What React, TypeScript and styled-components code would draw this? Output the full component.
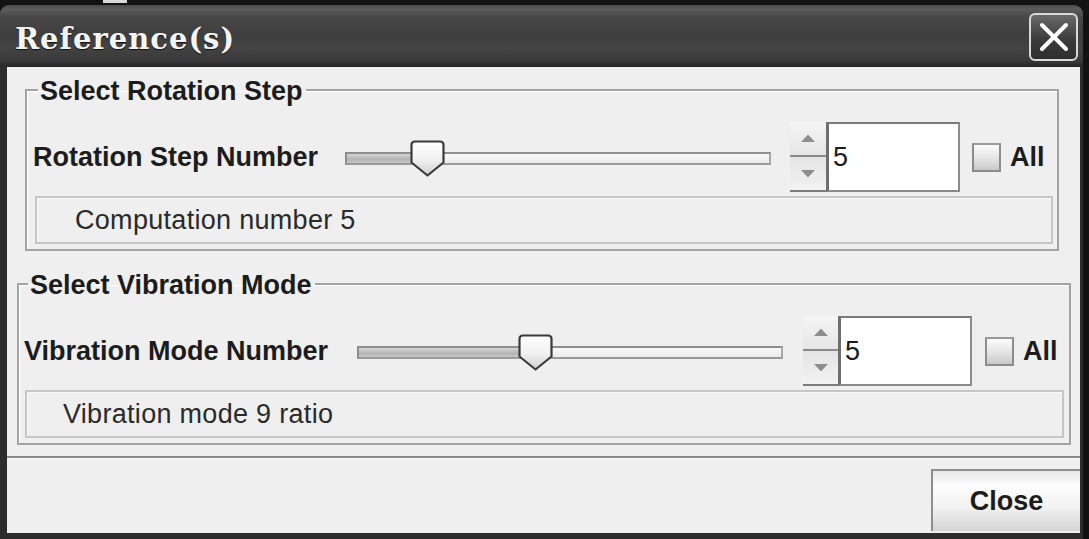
import React, { useId } from "react";
import styled, { createGlobalStyle } from "styled-components";

const Global = createGlobalStyle`
  html, body { margin: 0; padding: 0; background: #121212; }
  body { width: 1089px; height: 539px; overflow: hidden; }
  * { box-sizing: border-box; }
`;

const Screen = styled.div`
  width: 1089px;
  height: 539px;
  background: #121212;
  display: flex;
  flex-direction: column;
`;

const TopStrip = styled.div`
  height: 5px;
  display: flex;
`;

const Patch = styled.div`
  margin-left: 103px;
  width: 24px;
  height: 3px;
  background: #d8d8d8;
`;

const Window = styled.div`
  width: 1083px;
  flex: 1;
  display: flex;
  flex-direction: column;
  background: #2c2c2c;
  border-radius: 9px 9px 0 0;
  overflow: hidden;
`;

const TitleBar = styled.div`
  height: 62px;
  flex: none;
  display: flex;
  align-items: center;
  justify-content: space-between;
  padding: 0 5px 0 15px;
  background: linear-gradient(
    to bottom,
    #4a4a4a 0px,
    #5c5c5c 4px,
    #484848 12px,
    #3e3e3e 30px,
    #444444 42px,
    #393939 56px,
    #262626 62px
  );
`;

const Title = styled.div`
  font-family: "DejaVu Serif", "Liberation Serif", serif;
  font-weight: 700;
  font-size: 29px;
  letter-spacing: 1px;
  color: #f4f4f4;
  text-shadow: 0 1px 1px #111;
  margin-top: 5px;
`;

const XButton = styled.div`
  width: 49px;
  height: 48px;
  margin-top: 1px;
  border: 2px solid #d9d9d9;
  border-radius: 6px;
  background: linear-gradient(to bottom, #6a6a6a, #3c3c3c 55%, #2e2e2e);
  display: flex;
  align-items: center;
  justify-content: center;
`;

const Body = styled.div`
  flex: 1;
  display: flex;
  flex-direction: column;
  margin: 0 3px 6px 7px;
  background: #efefef;
`;

const Group = styled.fieldset<{ $left: number; $right: number; $top: number }>`
  margin: ${(p) => p.$top}px ${(p) => p.$right}px 0 ${(p) => p.$left}px;
  padding: 0 0 5px 0;
  border: 2px solid #a3a3a3;
  box-shadow: inset 1px 1px 0 #ffffff;
  min-width: 0;
`;

const Legend = styled.legend<{ $indent: number }>`
  margin-left: ${(p) => p.$indent}px;
  padding: 3px 3px 0 2px;
  font-family: "Liberation Sans", Arial, sans-serif;
  font-weight: 700;
  font-size: 27px;
  line-height: 27px;
  color: #1c1c1c;
`;

const Row = styled.div<{ $indent: number }>`
  margin-top: 17px;
  height: 70px;
  display: flex;
  align-items: center;
  padding-left: ${(p) => p.$indent}px;
`;

const FieldLabel = styled.div<{ $w: number }>`
  width: ${(p) => p.$w}px;
  flex: none;
  font-family: "Liberation Sans", Arial, sans-serif;
  font-weight: 700;
  font-size: 27px;
  color: #1c1c1c;
  white-space: nowrap;
`;

const SliderBox = styled.div`
  position: relative;
  width: 426px;
  height: 37px;
  flex: none;
  margin-top: 2px;
`;

const Track = styled.div`
  position: absolute;
  left: 0;
  right: 0;
  top: 12px;
  height: 13px;
  border: 2px solid #8e8e8e;
  border-right-color: #a8a8a8;
  border-bottom-color: #9a9a9a;
  background: linear-gradient(to bottom, #f8f8f8, #ececec);
`;

const TrackFill = styled.div`
  height: 100%;
  background: linear-gradient(to bottom, #d6d6d6, #b4b4b4 60%, #c8c8c8);
`;

const ThumbWrap = styled.div`
  position: absolute;
  top: 0;
  width: 35px;
  height: 37px;
`;

const Spinner = styled.div<{ $gap: number }>`
  margin-left: ${(p) => p.$gap}px;
  height: 70px;
  display: flex;
  flex: none;
`;

const ArrowCol = styled.div<{ $w: number }>`
  width: ${(p) => p.$w}px;
  display: flex;
  flex-direction: column;
  background: #ebebeb;
  border-bottom: 2px solid #7c7c7c;
`;

const ArrowBtn = styled.div<{ $down?: boolean }>`
  flex: 1;
  display: flex;
  align-items: center;
  justify-content: center;
  background: ${(p) =>
    p.$down
      ? "linear-gradient(to bottom, #e4e4e4, #f2f2f2)"
      : "linear-gradient(to bottom, #f4f4f4, #e6e6e6)"};
  border-top: ${(p) => (p.$down ? "2px solid #8a8a8a" : "none")};
`;

const NumberField = styled.div`
  width: 134px;
  height: 70px;
  background: #ffffff;
  border-top: 2px solid #7a7a7a;
  border-left: 3px solid #6e6e6e;
  border-right: 2px solid #8c8c8c;
  border-bottom: 2px solid #8c8c8c;
  padding-left: 4px;
  display: flex;
  align-items: center;
  font-family: "Liberation Sans", Arial, sans-serif;
  font-size: 27px;
  color: #1c1c1c;
`;

const CheckBox = styled.div<{ $gap: number }>`
  margin-left: ${(p) => p.$gap}px;
  width: 29px;
  height: 29px;
  flex: none;
  border: 2px solid #8c8c8c;
  border-top-color: #9a9a9a;
  background: linear-gradient(to bottom, #fbfbfb, #e6e6e6 50%, #c9c9c9);
`;

const CheckLabel = styled.div`
  margin-left: 9px;
  font-family: "Liberation Sans", Arial, sans-serif;
  font-weight: 700;
  font-size: 27px;
  color: #1c1c1c;
`;

const InfoBox = styled.div<{ $left: number; $right: number }>`
  margin: 4px ${(p) => p.$right}px 0 ${(p) => p.$left}px;
  height: 48px;
  border: 2px solid #c6c6c6;
  box-shadow: inset 1px 1px 0 #f8f8f8;
  display: flex;
  align-items: center;
  font-family: "Liberation Sans", Arial, sans-serif;
  font-size: 27px;
  letter-spacing: 0.3px;
  color: #2a2a2a;
`;

const InfoText = styled.span<{ $indent: number }>`
  padding-left: ${(p) => p.$indent}px;
`;

const Separator = styled.div`
  margin-top: 11px;
  height: 3px;
  border-top: 2px solid #8a8a8a;
  background: #fafafa;
`;

const Footer = styled.div`
  flex: 1;
  display: flex;
  justify-content: flex-end;
  align-items: flex-start;
  padding-top: 10px;
`;

const CloseButton = styled.div`
  width: 149px;
  height: 62px;
  border-top: 2px solid #8e8e8e;
  border-left: 2px solid #8e8e8e;
  background: linear-gradient(to bottom, #e6e6e6, #fdfdfd 25%, #f2f2f2 60%, #d4d4d4);
  display: flex;
  align-items: center;
  justify-content: center;
  font-family: "Liberation Sans", Arial, sans-serif;
  font-weight: 700;
  font-size: 27px;
  color: #1c1c1c;
`;

function Thumb() {
  const id = useId().replace(/:/g, "");
  return (
    <svg width="35" height="37" viewBox="0 0 35 37">
      <defs>
        <linearGradient id={`g${id}`} x1="0" y1="0" x2="0" y2="1">
          <stop offset="0" stopColor="#ffffff" />
          <stop offset="0.55" stopColor="#f0f0f0" />
          <stop offset="1" stopColor="#cfcfcf" />
        </linearGradient>
      </defs>
      <path
        d="M5 1.5 H30 Q33.5 1.5 33.5 5 V22.5 L17.5 35.5 L1.5 22.5 V5 Q1.5 1.5 5 1.5 Z"
        fill={`url(#g${id})`}
        stroke="#3b3b3b"
        strokeWidth="2.2"
        strokeLinejoin="round"
      />
    </svg>
  );
}

function Slider({ thumbLeft }: { thumbLeft: number }) {
  return (
    <SliderBox>
      <Track>
        <TrackFill style={{ width: thumbLeft + 10 }} />
      </Track>
      <ThumbWrap style={{ left: thumbLeft }}>
        <Thumb />
      </ThumbWrap>
    </SliderBox>
  );
}

function Arrow({ down }: { down?: boolean }) {
  return (
    <svg width="16" height="9" viewBox="0 0 16 9">
      <polygon
        points={down ? "1,1 15,1 8,8.5" : "1,8 15,8 8,0.5"}
        fill="#8d8d8d"
      />
    </svg>
  );
}

type SelectorProps = {
  legend: string;
  label: string;
  info: string;
  top: number;
  left: number;
  right: number;
  legendIndent: number;
  rowIndent: number;
  labelW: number;
  thumbLeft: number;
  spinGap: number;
  arrowW: number;
  checkGap: number;
  infoLeft: number;
  infoRight: number;
  infoIndent: number;
};

function Selector(p: SelectorProps) {
  return (
    <Group $top={p.top} $left={p.left} $right={p.right}>
      <Legend $indent={p.legendIndent}>{p.legend}</Legend>
      <Row $indent={p.rowIndent}>
        <FieldLabel $w={p.labelW}>{p.label}</FieldLabel>
        <Slider thumbLeft={p.thumbLeft} />
        <Spinner $gap={p.spinGap}>
          <ArrowCol $w={p.arrowW}>
            <ArrowBtn>
              <Arrow />
            </ArrowBtn>
            <ArrowBtn $down>
              <Arrow down />
            </ArrowBtn>
          </ArrowCol>
          <NumberField>5</NumberField>
        </Spinner>
        <CheckBox $gap={p.checkGap} />
        <CheckLabel>All</CheckLabel>
      </Row>
      <InfoBox $left={p.infoLeft} $right={p.infoRight}>
        <InfoText $indent={p.infoIndent}>{p.info}</InfoText>
      </InfoBox>
    </Group>
  );
}

export default function App() {
  return (
    <>
      <Global />
      <Screen>
        <TopStrip>
          <Patch />
        </TopStrip>
        <Window>
          <TitleBar>
            <Title>Reference(s)</Title>
            <XButton>
              <svg width="30" height="30" viewBox="0 0 30 30">
                <path
                  d="M3 3 L27 27 M27 3 L3 27"
                  stroke="#ffffff"
                  strokeWidth="4"
                  strokeLinecap="round"
                />
              </svg>
            </XButton>
          </TitleBar>
          <Body>
            <Selector
              legend="Select Rotation Step"
              label="Rotation Step Number"
              info="Computation number 5"
              top={8}
              left={18}
              right={21}
              legendIndent={11}
              rowIndent={6}
              labelW={312}
              thumbLeft={65}
              spinGap={19}
              arrowW={36}
              checkGap={12}
              infoLeft={8}
              infoRight={4}
              infoIndent={38}
            />
            <Selector
              legend="Select Vibration Mode"
              label="Vibration Mode Number"
              info="Vibration mode 9 ratio"
              top={18}
              left={10}
              right={9}
              legendIndent={9}
              rowIndent={5}
              labelW={333}
              thumbLeft={161}
              spinGap={20}
              arrowW={35}
              checkGap={13}
              infoLeft={6}
              infoRight={5}
              infoIndent={36}
            />
            <Separator />
            <Footer>
              <CloseButton>Close</CloseButton>
            </Footer>
          </Body>
        </Window>
      </Screen>
    </>
  );
}
